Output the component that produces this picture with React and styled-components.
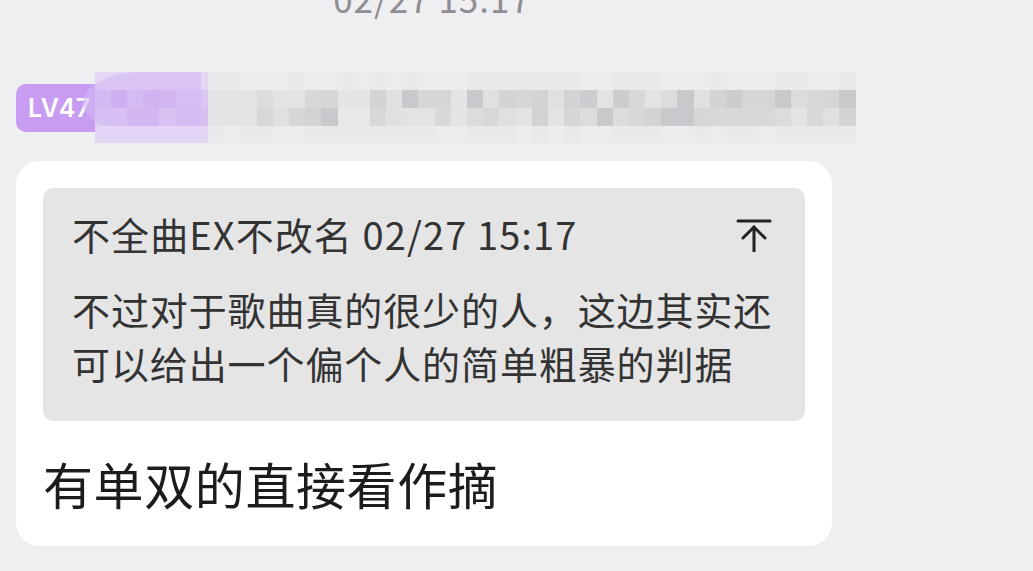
import React from 'react'
import styled, { createGlobalStyle } from 'styled-components'

const GlobalStyle = createGlobalStyle`
    html, body {
        margin: 0;
        padding: 0;
        background: #efeff1;
        overflow: hidden;
    }
    body {
        font-family: "Noto Sans CJK SC", "Noto Sans", sans-serif;
    }
`

//* mosaic colours for the blurred nickname
const PURPLE = ['#dccaf3', '#d5bdf2', '#d0b5f1', '#cdb0f0', '#d7c2f3', '#c9a6f0', '#dac7f3', '#e2d4f5']
const GRAY = ['#dcdcdf', '#d3d3d6', '#cdcdd1', '#d8d8db', '#e3e3e6', '#c9c9cd', '#d6d6d9', '#e0e0e3']

const rand = (i, j) => {
    const x = Math.sin(i * 12.9898 + j * 78.233) * 43758.5453
    return x - Math.floor(x)
}

const cellColor = (col, row) => {
    const edge = row === 0 || row === 3
    if (col < 7) {
        if (edge) return row === 0 ? '#e4d8f5' : '#e3d6f4'
        return PURPLE[Math.floor(rand(col, row) * PURPLE.length)]
    }
    if (edge) return rand(col, row) > 0.5 ? '#ececee' : '#e9e9ec'
    const gap = col === 15 || col === 16 || col === 22
    if (gap) return rand(col, row) > 0.5 ? '#e8e8ea' : '#e4e4e7'
    return GRAY[Math.floor(rand(col, row) * GRAY.length)]
}

const ArrowTop = () => (
    <svg width="36" height="36" viewBox="0 0 36 36" fill="none" stroke="#222" strokeWidth="3" strokeLinecap="round">
        <path d="M2 5h32" />
        <path d="M18 11v24" />
        <path d="M7 22l11-11 11 11" />
    </svg>
)

const App = () => {
    const cols = 47
    return (
        <>
            <GlobalStyle />
            <Page>
                <TimeRow>
                    <Time>02/27 15:17</Time>
                </TimeRow>
                <Author>
                    <Level>LV47</Level>
                    <Mosaic>
                        {Array.from({ length: cols }).map((_, c) => (
                            <Column key={c}>
                                {[0, 1, 2, 3].map((r) => (
                                    <Cell key={r} $color={cellColor(c, r)} $tall={r === 1 || r === 2} />
                                ))}
                            </Column>
                        ))}
                        <Blob />
                    </Mosaic>
                </Author>
                <Card>
                    <Quote>
                        <QuoteHead>
                            <QuoteMeta>不全曲EX不改名 02/27 15:17</QuoteMeta>
                            <ArrowTop />
                        </QuoteHead>
                        <QuoteBody>
                            <Line>不过对于歌曲真的很少的人，这边其实还</Line>
                            <Line>可以给出一个偏个人的简单粗暴的判据</Line>
                        </QuoteBody>
                    </Quote>
                    <Message>有单双的直接看作摘</Message>
                </Card>
            </Page>
        </>
    )
}

const Page = styled.div`
    display: flex;
    flex-direction: column;
    width: 1033px;
    height: 571px;
    padding-left: 16px;
    box-sizing: border-box;
`

const TimeRow = styled.div`
    display: flex;
    justify-content: center;
    width: 832px;
    margin-top: -20px;
`

const Time = styled.div`
    font-size: 35px;
    line-height: 35px;
    color: #8d8d92;
    letter-spacing: 1px;
`

const Author = styled.div`
    display: flex;
    align-items: center;
    height: 71px;
    margin-top: 57px;
`

const Level = styled.div`
    display: flex;
    align-items: center;
    height: 48px;
    padding: 0 30px 0 12px;
    border-radius: 10px;
    background: #c79cf1;
    color: #fff;
    font-family: "Inter", "Noto Sans", sans-serif;
    font-weight: 600;
    font-size: 25px;
    letter-spacing: 0.5px;
`

const Mosaic = styled.div`
    position: relative;
    display: flex;
    height: 71px;
    margin-left: -26px;
`

const Column = styled.div`
    display: flex;
    flex-direction: column;
    width: 16.2px;
`

const Cell = styled.div`
    height: ${(p) => (p.$tall ? '18px' : '17.5px')};
    background: ${(p) => p.$color};
`

const Blob = styled.div`
    position: absolute;
    left: -12px;
    top: 0;
    width: 118px;
    height: 54px;
    border-radius: 60px 0 0 30px / 30px 0 0 24px;
    background: rgba(210, 184, 244, 0.6);
`

const Card = styled.div`
    display: flex;
    flex-direction: column;
    width: 816px;
    margin-top: 18px;
    padding: 27px 27px 33px;
    box-sizing: border-box;
    border-radius: 24px;
    background: #fff;
`

const Quote = styled.div`
    display: flex;
    flex-direction: column;
    gap: 26px;
    padding: 24px 33px 31px 29px;
    border-radius: 10px;
    background: #e5e5e6;
    color: #333;
`

const QuoteHead = styled.div`
    display: flex;
    align-items: center;
    justify-content: space-between;
    height: 44px;
`

const QuoteMeta = styled.div`
    font-size: 38px;
    line-height: 44px;
    letter-spacing: 1.1px;
    white-space: nowrap;
`

const QuoteBody = styled.div`
    display: flex;
    flex-direction: column;
`

const Line = styled.div`
    font-size: 38px;
    line-height: 54px;
    letter-spacing: 0.9px;
    white-space: nowrap;
`

const Message = styled.div`
    margin-top: 32px;
    font-size: 50px;
    line-height: 60px;
    color: #1c1c1c;
    letter-spacing: 0.6px;
`

export default App
